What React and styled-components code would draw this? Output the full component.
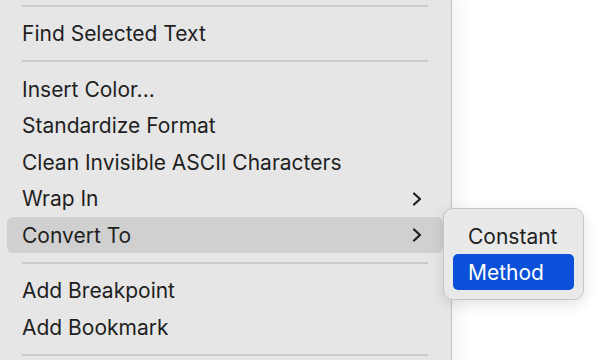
import styled, { createGlobalStyle } from "styled-components"

const Global = createGlobalStyle`
  html, body {
    margin: 0;
    padding: 0;
    background: #ffffff;
    width: 600px;
    height: 360px;
    overflow: hidden;
    font-family: Inter, "Liberation Sans", sans-serif;
  }
`

const items = [
  { type: "sep" },
  { label: "Find Selected Text" },
  { type: "sep" },
  { label: "Insert Color..." },
  { label: "Standardize Format" },
  { label: "Clean Invisible ASCII Characters" },
  { label: "Wrap In", sub: true },
  { label: "Convert To", sub: true, active: true },
  { type: "sep" },
  { label: "Add Breakpoint" },
  { label: "Add Bookmark" },
  { type: "sep" },
]

function Chevron() {
  return (
    <svg width="12" height="16" viewBox="0 0 12 16">
      <path d="M3 2.5 L9 8 L3 13.5" fill="none" stroke="#1e1e1e" strokeWidth="2.2" strokeLinecap="round" strokeLinejoin="round" />
    </svg>
  )
}

export default function App() {
  return (
    <>
      <Global />
      <Page>
        <Menu>
          {items.map((it, i) =>
            it.type === "sep" ? (
              <Separator key={i} />
            ) : (
              <Item key={i} $active={it.active}>
                <span>{it.label}</span>
                {it.sub && <Chevron />}
              </Item>
            )
          )}
        </Menu>
        <SubMenu>
          <SubItem>Constant</SubItem>
          <SubItem $selected>Method</SubItem>
        </SubMenu>
      </Page>
    </>
  )
}

const Page = styled.div`
  position: relative;
  width: 600px;
  height: 360px;
  display: flex;
  align-items: flex-start;
`

const Menu = styled.div`
  width: 451px;
  min-height: 380px;
  margin-top: -4px;
  background: #e6e6e6;
  border-right: 1px solid #c4c4c4;
  box-shadow: 4px 0 18px rgba(0, 0, 0, 0.07);
  display: flex;
  flex-direction: column;
  flex-shrink: 0;
`

const Separator = styled.div`
  height: 19px;
  flex-shrink: 0;
  display: flex;
  align-items: center;
  padding: 0 23px 0 22px;
  &::after {
    content: "";
    flex: 1;
    height: 2px;
    background: #cbcbcb;
  }
`

const Item = styled.div`
  height: 36.5px;
  flex-shrink: 0;
  margin: 0 8px 0 7px;
  padding: 1px 20px 0 15px;
  box-sizing: border-box;
  display: flex;
  align-items: center;
  justify-content: space-between;
  border-radius: 6px;
  font-size: 21px;
  color: #1f1f1f;
  background: ${(p) => (p.$active ? "#d0d0d0" : "transparent")};
  svg {
    display: block;
  }
`

const SubMenu = styled.div`
  position: absolute;
  left: 443px;
  top: 208px;
  width: 121px;
  padding: 9px 9px;
  background: #e9e9e9;
  border: 1px solid #c6c6c6;
  border-radius: 10px;
  box-shadow: 0 4px 14px rgba(0, 0, 0, 0.12);
  display: flex;
  flex-direction: column;
`

const SubItem = styled.div`
  height: 36px;
  padding: 1px 15px 0;
  box-sizing: border-box;
  display: flex;
  align-items: center;
  border-radius: 5px;
  font-size: 21px;
  color: ${(p) => (p.$selected ? "#ffffff" : "#1f1f1f")};
  background: ${(p) => (p.$selected ? "#0a50d8" : "transparent")};
`
